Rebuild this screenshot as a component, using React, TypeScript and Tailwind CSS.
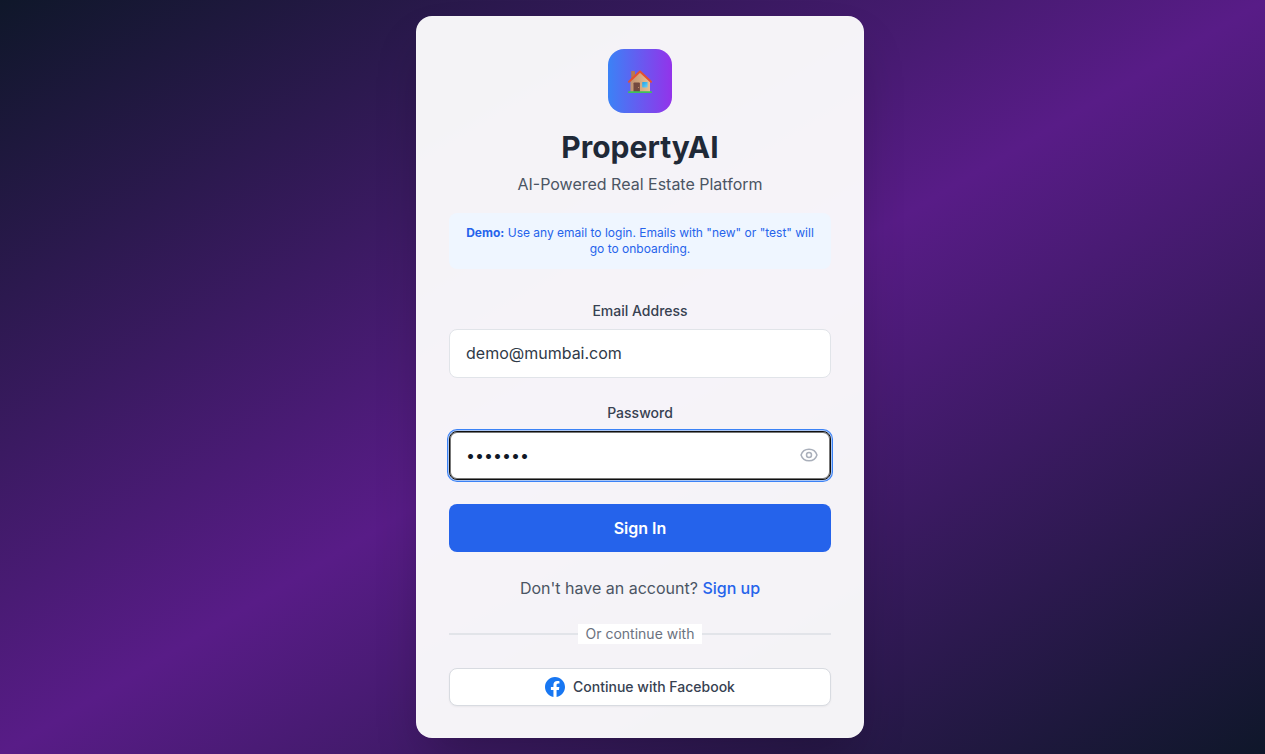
import { useState } from "react";
import type { FormEvent } from "react";

function HouseIcon() {
  return (
    <svg className="h-8 w-8" viewBox="0 1 32 32" role="img" aria-label="House">
      <defs>
        <linearGradient id="wall" x1="0" y1="0" x2="1" y2="0">
          <stop offset="0" stopColor="#c09270" />
          <stop offset="1" stopColor="#ebbf90" />
        </linearGradient>
        <linearGradient id="pane" x1="0" y1="0" x2="1" y2="1">
          <stop offset="0" stopColor="#1fa2e8" />
          <stop offset="1" stopColor="#6bd3f5" />
        </linearGradient>
      </defs>
      <rect x="7.2" y="7" width="3.8" height="8" rx="0.5" fill="#b5794f" />
      <path d="M16 7.5 26 17v11.2H6.4V17z" fill="url(#wall)" />
      <path d="M9.5 19.3a.8.8 0 01.8-.8h4.8a.8.8 0 01.8.8v9H9.5z" fill="#74493f" />
      <circle cx="14.6" cy="23.6" r="0.5" fill="#d9a577" />
      <rect x="18.2" y="18" width="5.4" height="5.4" rx="0.4" fill="url(#pane)" />
      <path d="M5 17.8 16 7.4 27 17.8" fill="none" stroke="#e5502f" strokeWidth="2" strokeLinecap="round" strokeLinejoin="round" />
      <rect x="4" y="27.2" width="24" height="1.9" rx="0.9" fill="#3fc15a" />
    </svg>
  );
}

function FacebookIcon() {
  return (
    <svg className="h-5 w-5 shrink-0" viewBox="0 0 24 24" fill="#1877F2" aria-hidden="true">
      <path d="M24 12.073c0-6.627-5.373-12-12-12s-12 5.373-12 12c0 5.99 4.388 10.954 10.125 11.854v-8.385H7.078v-3.47h3.047V9.43c0-3.007 1.792-4.669 4.533-4.669 1.312 0 2.686.235 2.686.235v2.953H15.83c-1.491 0-1.956.925-1.956 1.874v2.25h3.328l-.532 3.47h-2.796v8.385C19.612 23.027 24 18.062 24 12.073z" />
    </svg>
  );
}

function EyeIcon() {
  return (
    <svg
      className="h-5 w-5"
      viewBox="0 0 24 24"
      fill="none"
      stroke="currentColor"
      strokeWidth="1.8"
      strokeLinecap="round"
      strokeLinejoin="round"
      aria-hidden="true"
    >
      <path d="M15 12a3 3 0 11-6 0 3 3 0 016 0z" />
      <path d="M2.458 12C3.732 7.943 7.523 5 12 5c4.478 0 8.268 2.943 9.542 7-1.274 4.057-5.064 7-9.542 7-4.477 0-8.268-2.943-9.542-7z" />
    </svg>
  );
}

export default function App() {
  const [email, setEmail] = useState("demo@mumbai.com");
  const [password, setPassword] = useState("demo123");
  const [visible, setVisible] = useState(false);

  const handleSubmit = (event: FormEvent) => event.preventDefault();

  return (
    <main className="flex min-h-screen items-center justify-center bg-[linear-gradient(to_bottom_right,#0f172a,#581c87,#0f172a)] py-4 pr-4 pl-[31px] font-['Inter',sans-serif] text-base text-[#1f2937]">
      <div className="w-full max-w-md rounded-2xl border border-white/20 bg-white/95 px-8 pt-8 pb-[31px] text-center shadow-2xl">
        <header className="mb-8">
          <div className="mx-auto mb-4 flex h-16 w-16 items-center justify-center rounded-2xl bg-[linear-gradient(to_right,#3b82f6,#9333ea)]">
            <HouseIcon />
          </div>
          <h1 className="mb-[7px] text-3xl font-bold">PropertyAI</h1>
          <p className="text-[#4b5563]">AI-Powered Real Estate Platform</p>
          <p className="mt-[17px] rounded-lg bg-[#eff6ff] p-3 text-xs text-[#2563eb]">
            <strong className="font-bold">Demo:</strong> Use any email to login. Emails with "new" or "test" will go to onboarding.
          </p>
        </header>

        <form className="flex flex-col gap-6" onSubmit={handleSubmit}>
          <div className="flex flex-col gap-[25px]">
            <div className="flex flex-col gap-2">
              <label htmlFor="email" className="text-sm font-medium text-[#374151]">Email Address</label>
              <input
                id="email"
                type="email"
                value={email}
                onChange={(event) => setEmail(event.target.value)}
                className="h-[49px] w-full rounded-lg border border-[#e1e4e9] bg-white px-4 pb-0.5 text-[#303a48]"
              />
            </div>
            <div className="flex flex-col gap-2">
              <label htmlFor="password" className="text-sm font-medium text-[#374151]">Password</label>
              <div className="relative">
                <input
                  id="password"
                  type={visible ? "text" : "password"}
                  value={password}
                  onChange={(event) => setPassword(event.target.value)}
                  className="block h-[49px] w-full rounded-lg border border-[#101010] bg-white pr-12 pb-0.5 pl-4 text-[#111827] shadow-[inset_0_0_0_1px_#777777,0_0_0_1px_#a9c5f5,0_0_0_2px_#3b82f6] outline-none"
                />
                <button
                  type="button"
                  aria-label="Show password"
                  onClick={() => setVisible(!visible)}
                  className="absolute inset-y-0 right-0 flex items-center pr-3 pb-0.5 text-[#a9afba]"
                >
                  <EyeIcon />
                </button>
              </div>
            </div>
          </div>
          <button type="submit" className="w-full rounded-lg bg-[#2563eb] px-4 py-3 font-semibold text-white">
            Sign In
          </button>
        </form>

        <p className="mt-6 text-[#4b5563]">
          Don't have an account? <a href="#signup" className="font-medium text-[#2563eb]">Sign up</a>
        </p>

        <div className="mt-6 flex items-center text-sm text-[#6b7280]">
          <span className="h-0.5 flex-1 bg-[#e2e4e9]" />
          <span className="bg-white px-2">Or continue with</span>
          <span className="h-0.5 flex-1 bg-[#e2e4e9]" />
        </div>

        <button
          type="button"
          className="mt-6 flex w-full items-center justify-center gap-2 rounded-lg border border-[#d8dbe1] bg-white px-4 py-2 text-sm font-medium text-[#374151] shadow-xs"
        >
          <FacebookIcon />
          Continue with Facebook
        </button>
      </div>
    </main>
  );
}
